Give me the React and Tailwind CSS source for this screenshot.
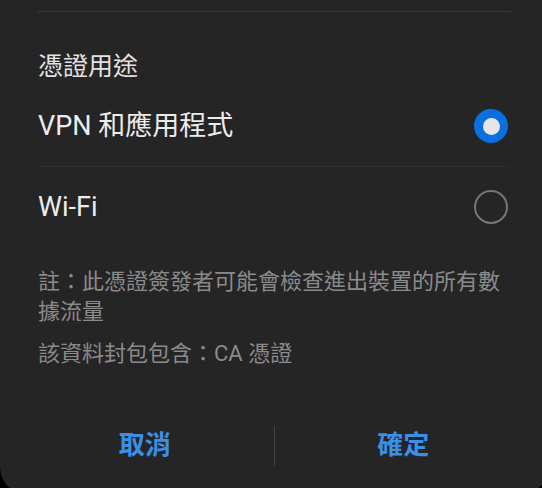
import React, { useState } from 'react';

const options = [
    { id: 'vpn', label: 'VPN 和應用程式' },
    { id: 'wifi', label: 'Wi-Fi' }
];

const Radio = ({ checked }) => (
    checked ? (
        <div className="w-[34px] h-[34px] rounded-full bg-[#0b6fdf] flex items-center justify-center">
            <div className="w-[17px] h-[17px] rounded-full bg-[#e6e6e6]"></div>
        </div>
    ) : (
        <div className="w-[34px] h-[34px] rounded-full border-2 border-[#767676]"></div>
    )
);

const App = () => {
    const [selected, setSelected] = useState('vpn');

    return (
        <div className="w-[542px] h-[488px] bg-black overflow-hidden" style={{ fontFamily: '"Roboto", "Noto Sans CJK TC", sans-serif' }}>
            <div className="w-[548px] h-[520px] -mt-[25px] bg-[#252525] rounded-[28px] flex flex-col">
                <div className="ml-[38px] w-[473px] flex flex-col">
                    {/* Top divider */}
                    <div className="mt-[36px] h-px bg-[#3b3b3b]"></div>

                    {/* Title */}
                    <h2 className="mt-[41px] text-[25px] leading-[28px] text-[#e2e2e2]">憑證用途</h2>

                    {/* Options */}
                    <div className="mt-[5px] flex flex-col">
                        {options.map((opt, i) => (
                            <div key={opt.id}>
                                {i > 0 && <div className="h-px bg-[#2e2e2e]"></div>}
                                <div
                                    onClick={() => setSelected(opt.id)}
                                    className="h-[80px] pr-[3px] flex items-center justify-between cursor-pointer"
                                >
                                    <span className="text-[27px] text-[#ececec]">{opt.label}</span>
                                    <Radio checked={selected === opt.id} />
                                </div>
                            </div>
                        ))}
                    </div>

                    {/* Notes */}
                    <p className="mt-[20px] text-[22px] leading-[30px] text-[#8b8b8b]">
                        註：此憑證簽發者可能會檢查進出裝置的所有數據流量
                    </p>
                    <p className="mt-[12px] text-[22px] leading-[30px] text-[#8b8b8b]">該資料封包包含：CA 憑證</p>
                </div>

                {/* Buttons */}
                <div className="mt-[53px] ml-[16px] w-[516px] flex items-center">
                    <button className="flex-1 text-[26px] font-bold text-[#3b8fe5] py-[4px]">取消</button>
                    <div className="w-px h-[40px] bg-[#454545]"></div>
                    <button className="flex-1 text-[26px] font-bold text-[#3b8fe5] py-[4px]">確定</button>
                </div>
            </div>
        </div>
    );
};

export default App;
